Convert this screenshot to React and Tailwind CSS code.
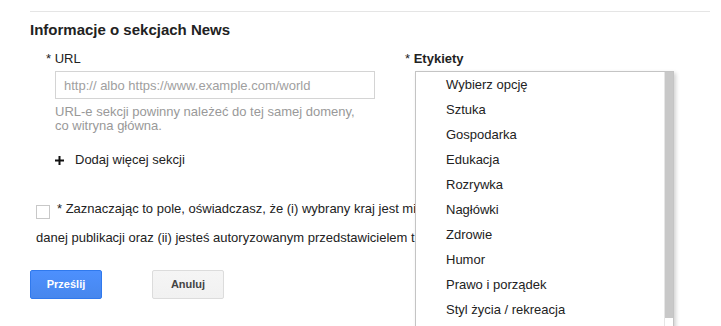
import React from 'react';

const options = [
  'Wybierz opcję',
  'Sztuka',
  'Gospodarka',
  'Edukacja',
  'Rozrywka',
  'Nagłówki',
  'Zdrowie',
  'Humor',
  'Prawo i porządek',
  'Styl życia / rekreacja',
];

function PlusIcon() {
  return (
    <svg width="9" height="9" viewBox="0 0 9 9" className="shrink-0">
      <rect x="0" y="3.5" width="9" height="2" fill="#111" />
      <rect x="3.5" y="0" width="2" height="9" fill="#111" />
    </svg>
  );
}

function LabelsDropdown() {
  return (
    <div className="absolute left-[10px] top-[20px] z-10 flex h-[280px] w-[259px] border border-[#c4c4c4] bg-white shadow-[2px_2px_4px_rgba(0,0,0,0.18)]">
      <ul className="flex-1">
        {options.map((o) => (
          <li key={o} className="pl-[30px] text-[13px] leading-[25px] text-[#222] whitespace-nowrap">
            {o}
          </li>
        ))}
      </ul>
      <div className="w-[9px] border-l border-[#e6e6e6]">
        <div className="h-[246px] bg-[#c8c8c8]" />
      </div>
    </div>
  );
}

export default function App() {
  return (
    <div
      className="relative h-[326px] w-[721px] overflow-hidden bg-white text-[#222]"
      style={{ fontFamily: '"Liberation Sans", Arial, sans-serif' }}
    >
      <div className="pl-[30px] pr-[11px] pt-[11px]">
        <div className="border-t border-[#e5e5e5]" />
        <h2 className="mt-[9px] text-[15px] font-bold leading-[18px] text-[#222]">
          Informacje o sekcjach News
        </h2>

        <div className="mt-[12px] flex">
          {/* URL column */}
          <div className="w-[375px] pl-[16px]">
            <div className="text-[13px] leading-[16px] text-[#222]">* URL</div>
            <input
              type="text"
              placeholder="http:// albo https://www.example.com/world"
              className="ml-[9px] mt-[4px] h-[28px] w-[320px] border border-[#d4d4d4] bg-white px-[8px] text-[13px] text-[#333] outline-none placeholder:text-[#a0a0a0]"
            />
            <p className="ml-[9px] mt-[6px] text-[13px] leading-[14px] text-[#999]">
              URL-e sekcji powinny należeć do tej samej domeny,
              <br />
              co witryna główna.
            </p>
            <button className="ml-[9px] mt-[19px] flex items-center gap-[11px] text-[13px] leading-[16px] text-[#222]">
              <PlusIcon />
              Dodaj więcej sekcji
            </button>
          </div>

          {/* Labels column */}
          <div className="relative flex-1">
            <div className="text-[13px] font-bold leading-[16px] text-[#222]">
              <span className="font-normal">*</span> Etykiety
            </div>
            <LabelsDropdown />
          </div>
        </div>

        <div className="mt-[33px] text-[13px] leading-[16px] text-[#222]">
          <div className="flex items-start pl-[6px]">
            <span className="mt-[3.5px] h-[14px] w-[14px] shrink-0 border border-[#c8c8c8] bg-white" />
            <span className="ml-[7px] whitespace-nowrap">
              * Zaznaczając to pole, oświadczasz, że (i) wybrany kraj jest mi
            </span>
          </div>
          <div className="mt-[11px] whitespace-nowrap pl-[6px]">
            danej publikacji oraz (ii) jesteś autoryzowanym przedstawicielem t
          </div>
        </div>

        <div className="mt-[24px] flex gap-[50px]">
          <button className="h-[29px] w-[72px] rounded-[2px] border border-[#3079ed] bg-gradient-to-b from-[#4d90fe] to-[#4787ed] text-[11px] font-bold text-white">
            Prześlij
          </button>
          <button className="h-[29px] w-[72px] rounded-[2px] border border-[#dcdcdc] bg-gradient-to-b from-[#f5f5f5] to-[#f1f1f1] text-[11px] font-bold text-[#444]">
            Anuluj
          </button>
        </div>
      </div>
    </div>
  );
}
